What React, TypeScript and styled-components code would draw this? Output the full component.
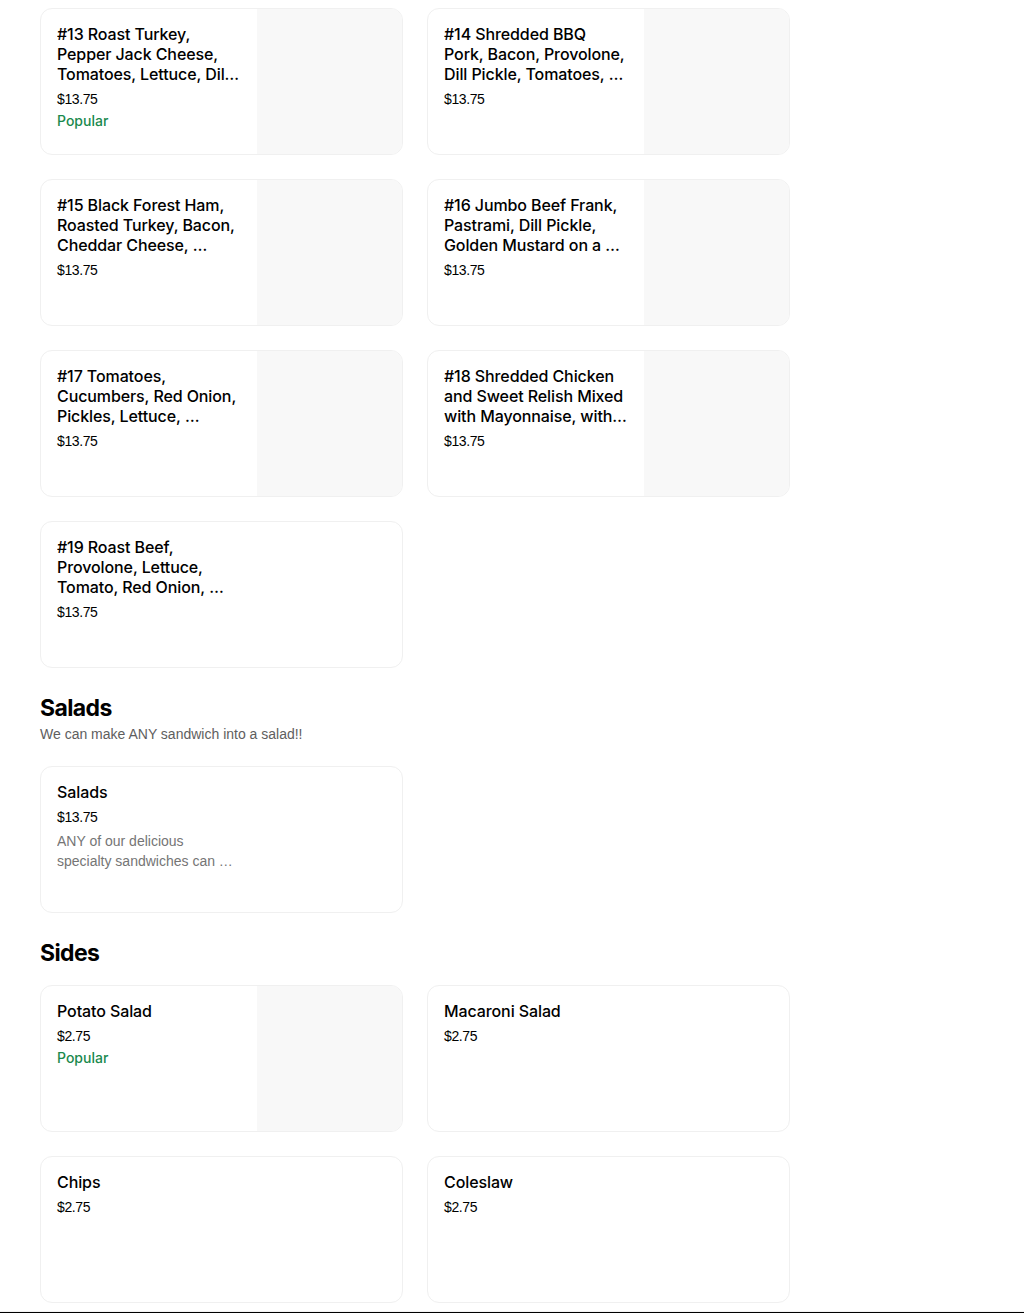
import styled, { createGlobalStyle } from 'styled-components';

type Item = {
  id: string;
  name: string;
  price: string;
  popular?: boolean;
  description?: string;
  photo?: boolean;
};

type Section = {
  id: string;
  title?: string;
  subtitle?: string;
  items: Item[];
};

// names are shown the way the menu truncates them
const sections: Section[] = [
  {
    id: 'sandwiches',
    items: [
      { id: 's13', name: '#13 Roast Turkey, Pepper Jack Cheese, Tomatoes, Lettuce, Dil\u2026', price: '$13.75', popular: true, photo: true },
      { id: 's14', name: '#14 Shredded BBQ Pork, Bacon, Provolone, Dill Pickle, Tomatoes,\u00a0\u2026', price: '$13.75', photo: true },
      { id: 's15', name: '#15 Black Forest Ham, Roasted Turkey, Bacon, Cheddar Cheese,\u00a0\u2026', price: '$13.75', photo: true },
      { id: 's16', name: '#16 Jumbo Beef Frank, Pastrami, Dill Pickle, Golden Mustard on a\u00a0\u2026', price: '$13.75', photo: true },
      { id: 's17', name: '#17 Tomatoes, Cucumbers, Red Onion, Pickles, Lettuce,\u00a0\u2026', price: '$13.75', photo: true },
      { id: 's18', name: '#18 Shredded Chicken and Sweet Relish Mixed with Mayonnaise, with\u2026', price: '$13.75', photo: true },
      { id: 's19', name: '#19 Roast Beef, Provolone, Lettuce, Tomato, Red Onion,\u00a0\u2026', price: '$13.75' },
    ],
  },
  {
    id: 'salads',
    title: 'Salads',
    subtitle: 'We can make ANY sandwich into a salad!!',
    items: [
      {
        id: 'salad',
        name: 'Salads',
        price: '$13.75',
        description: 'ANY of our delicious specialty sandwiches can\u00a0\u2026',
      },
    ],
  },
  {
    id: 'sides',
    title: 'Sides',
    items: [
      { id: 'potato', name: 'Potato Salad', price: '$2.75', popular: true, photo: true },
      { id: 'macaroni', name: 'Macaroni Salad', price: '$2.75' },
      { id: 'chips', name: 'Chips', price: '$2.75' },
      { id: 'coleslaw', name: 'Coleslaw', price: '$2.75' },
    ],
  },
];

export default function App() {
  return (
    <>
      <GlobalStyle />
      <Page>
        {sections.map((section) => (
          <MenuSection key={section.id}>
            {section.title && (
              <SectionHeader>
                <SectionTitle>{section.title}</SectionTitle>
                {section.subtitle && <SectionSubtitle>{section.subtitle}</SectionSubtitle>}
              </SectionHeader>
            )}
            <Grid>
              {section.items.map((item) => (
                <Card key={item.id}>
                  <Info>
                    <Name>{item.name}</Name>
                    <Price>{item.price}</Price>
                    {item.popular && <Popular>Popular</Popular>}
                    {item.description && <Description>{item.description}</Description>}
                  </Info>
                  {item.photo && <Thumb />}
                </Card>
              ))}
            </Grid>
          </MenuSection>
        ))}
      </Page>
      <Footer />
    </>
  );
}

const GlobalStyle = createGlobalStyle`
  body {
    margin: 0;
    background: #FFFFFF;
    font-family: Inter, "Liberation Sans", Arial, sans-serif;
    color: #000000;
  }

  * {
    box-sizing: border-box;
  }
`;

const Page = styled.main`
  padding: 8px 40px 0;
  display: flex;
  flex-direction: column;
  gap: 24px;
`;

const MenuSection = styled.section`
  display: flex;
  flex-direction: column;
`;

const SectionHeader = styled.div`
  display: flex;
  flex-direction: column;
  margin-bottom: 16px;
`;

const SectionTitle = styled.h2`
  margin: 0;
  font-size: 23px;
  line-height: 32px;
  font-weight: 700;
  letter-spacing: -0.6px;
`;

const SectionSubtitle = styled.p`
  margin: 0 0 6px;
  font-family: "Liberation Sans", Arial, sans-serif;
  font-size: 14px;
  line-height: 20px;
  color: #5e5e5e;
`;

const Grid = styled.div`
  display: grid;
  grid-template-columns: repeat(2, 363px);
  gap: 24px;
`;

const Card = styled.div`
  display: flex;
  height: 147px;
  border: 1px solid #f0f0f0;
  border-radius: 12px;
  overflow: hidden;
  background: #FFFFFF;
`;

const Info = styled.div`
  width: 216px;
  flex-shrink: 0;
  padding: 15px 16px 16px;
  display: flex;
  flex-direction: column;
`;

const Name = styled.div`
  font-size: 16px;
  line-height: 20px;
  font-weight: 500;
  letter-spacing: -0.1px;
  display: -webkit-box;
  -webkit-line-clamp: 3;
  -webkit-box-orient: vertical;
  overflow: hidden;
`;

const Price = styled.div`
  margin-top: 5px;
  font-family: "Liberation Sans", Arial, sans-serif;
  font-size: 14px;
  line-height: 20px;
  letter-spacing: -0.4px;
`;

const Popular = styled.div`
  margin-top: 2px;
  font-size: 14px;
  line-height: 20px;
  font-weight: 500;
  color: #1a8a4e;
`;

const Description = styled.div`
  margin-top: 4px;
  font-family: "Liberation Sans", Arial, sans-serif;
  font-size: 14px;
  line-height: 20px;
  color: #757575;
  display: -webkit-box;
  -webkit-line-clamp: 2;
  -webkit-box-orient: vertical;
  overflow: hidden;
`;

const Thumb = styled.div`
  flex: 1;
  background: #f8f8f8;
`;

const Footer = styled.footer`
  margin-top: 8px;
  border-top: 1px solid #f3f3f3;
  height: 200px;
  background: #000000;
`;
